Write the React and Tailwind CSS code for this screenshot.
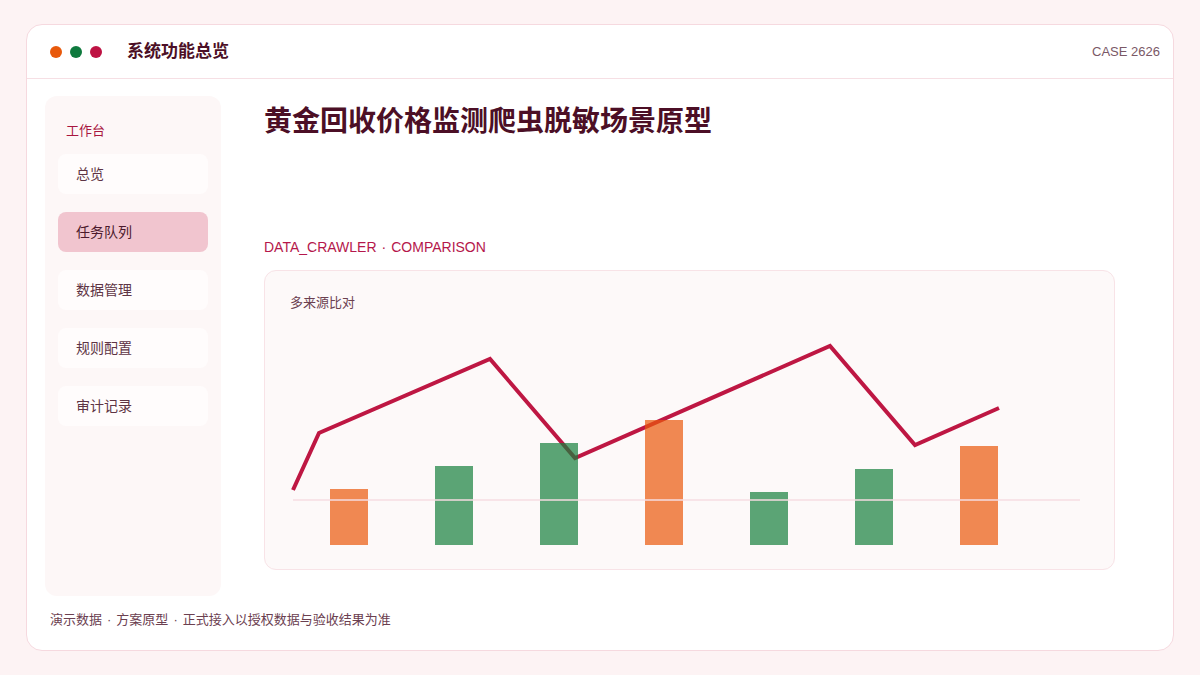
// App.jsx — system overview prototype screen

const navItems = [
  { label: "总览", active: false },
  { label: "任务队列", active: true },
  { label: "数据管理", active: false },
  { label: "规则配置", active: false },
  { label: "审计记录", active: false },
];

// bars: x (inside svg), top y, colour
const bars = [
  { x: 65, top: 159, tone: "orange" },
  { x: 170, top: 136, tone: "green" },
  { x: 275, top: 113, tone: "green" },
  { x: 380, top: 90, tone: "orange" },
  { x: 485, top: 162, tone: "green" },
  { x: 590, top: 139, tone: "green" },
  { x: 695, top: 116, tone: "orange" },
];

const linePoints = [
  [28, 160],
  [54, 103],
  [225, 29],
  [310, 128],
  [565, 16],
  [650, 115],
  [734, 78],
];

function CompareChart() {
  const base = 215;
  return (
    <svg width="849" height="240" viewBox="0 0 849 240" className="block">
      <polyline
        points={linePoints.map((p) => p.join(",")).join(" ")}
        fill="none"
        stroke="#be1743"
        strokeWidth="4"
        strokeLinejoin="miter"
      />
      {bars.map((b, i) => (
        <rect
          key={i}
          x={b.x}
          y={b.top}
          width="38"
          height={base - b.top}
          fill={b.tone === "orange" ? "#ea580c" : "#15803d"}
          fillOpacity="0.7"
        />
      ))}
      <line x1="28" y1="170" x2="815" y2="170" stroke="#f6dde2" strokeWidth="1.5" />
    </svg>
  );
}

function Dot() {
  return <span className="mx-[5px]">·</span>;
}

export default function App() {
  return (
    <div
      className="w-[1200px] h-[675px] bg-[#fdf3f4] pt-[24px] px-[26px]"
      style={{ fontFamily: '"Liberation Sans", "Noto Sans CJK SC", sans-serif' }}
    >
      <div className="h-[627px] bg-white border border-[#f6d9df] rounded-[16px] flex flex-col">
        {/* ── Header ── */}
        <header className="h-[54px] shrink-0 border-b border-[#f6dfe4] flex items-center justify-between pl-[23px] pr-[13px]">
          <div className="flex items-center">
            <div className="flex items-center gap-[8px]">
              <span className="w-[12px] h-[12px] rounded-full bg-[#e8590c]" />
              <span className="w-[12px] h-[12px] rounded-full bg-[#0f7a3e]" />
              <span className="w-[12px] h-[12px] rounded-full bg-[#be1243]" />
            </div>
            <span className="ml-[25px] text-[17px] font-bold text-[#4c0f26]">系统功能总览</span>
          </div>
          <span className="text-[13px] text-[#7a5866]">CASE 2626</span>
        </header>

        {/* ── Body ── */}
        <div className="flex pt-[17px] pl-[18px]">
          {/* Sidebar */}
          <aside className="w-[176px] h-[500px] shrink-0 bg-[#fdf7f7] rounded-[12px] pt-[25px] px-[13px]">
            <div className="pl-[8px] text-[13px] leading-[20px] text-[#a8163f]">工作台</div>
            <nav className="mt-[13px] flex flex-col gap-[18px]">
              {navItems.map((item) => (
                <div
                  key={item.label}
                  className={
                    item.active
                      ? "h-[40px] rounded-[8px] bg-[#f1c5cf] flex items-center pl-[18px] text-[14px] text-[#4c1a2c]"
                      : "h-[40px] rounded-[8px] bg-[#fffcfc] flex items-center pl-[18px] text-[14px] text-[#5e3444]"
                  }
                >
                  {item.label}
                </div>
              ))}
            </nav>
          </aside>

          {/* Main */}
          <main className="ml-[43px] w-[851px] flex flex-col">
            <h1 className="mt-[7px] text-[28px] leading-[38px] font-bold text-[#4c0f26]">
              黄金回收价格监测爬虫脱敏场景原型
            </h1>
            <div className="mt-[97px] text-[14px] leading-[18px] text-[#b5174b]">
              DATA_CRAWLER<Dot />COMPARISON
            </div>
            <section className="mt-[14px] h-[300px] bg-[#fdf9f9] border border-[#f8e3e7] rounded-[12px] overflow-hidden">
              <div className="pt-[22px] pl-[25px] text-[13px] leading-[20px] text-[#6b4050]">多来源比对</div>
              <div className="mt-[17px]">
                <CompareChart />
              </div>
            </section>
          </main>
        </div>

        {/* Footer */}
        <div className="mt-[15px] pl-[23px] text-[13px] leading-[18px] text-[#6b4050]">
          演示数据<Dot />方案原型<Dot />正式接入以授权数据与验收结果为准
        </div>
      </div>
    </div>
  );
}
